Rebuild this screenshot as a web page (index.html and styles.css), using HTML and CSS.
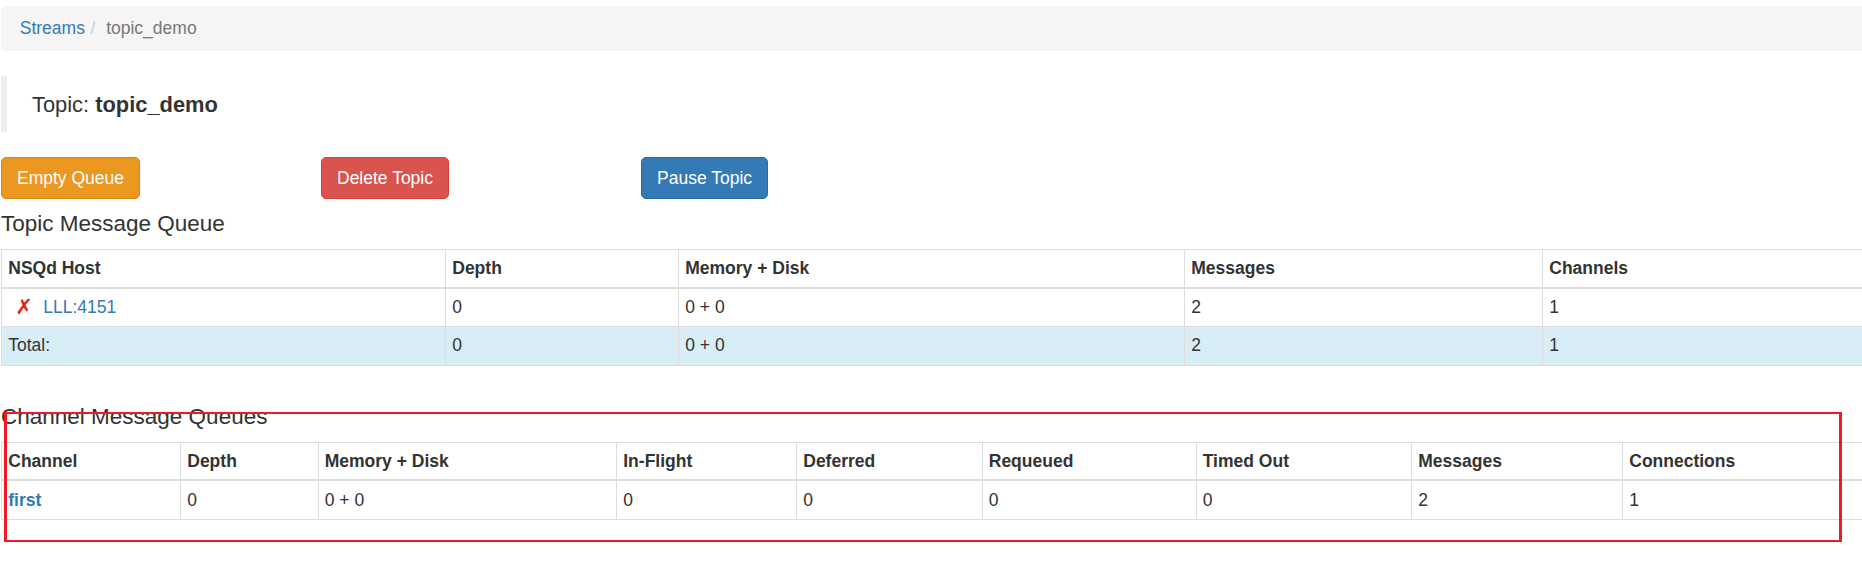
FILE: index.html
```html
<!DOCTYPE html>
<html lang="en">
<head>
<meta charset="utf-8">
<title>topic_demo - nsqadmin</title>
<link rel="stylesheet" href="styles.css">
</head>
<body>
<div class="page">
  <ol class="breadcrumb">
    <li><a href="#">Streams</a></li>
    <li class="active">topic_demo</li>
  </ol>

  <blockquote class="topic-title">Topic: <strong>topic_demo</strong></blockquote>

  <div class="actions">
    <button class="btn btn-warning">Empty Queue</button>
    <button class="btn btn-danger">Delete Topic</button>
    <button class="btn btn-primary">Pause Topic</button>
  </div>

  <h4 class="section-title">Topic Message Queue</h4>
  <table class="table t-topic">
    <colgroup>
      <col class="c-host"><col class="c-depth"><col class="c-mem"><col class="c-msgs"><col>
    </colgroup>
    <thead>
      <tr><th>NSQd Host</th><th>Depth</th><th>Memory + Disk</th><th>Messages</th><th>Channels</th></tr>
    </thead>
    <tbody>
      <tr>
        <td><span class="tomb">✗</span><a href="#">LLL:4151</a></td>
        <td>0</td><td>0 + 0</td><td>2</td><td>1</td>
      </tr>
      <tr class="info">
        <td>Total:</td><td>0</td><td>0 + 0</td><td>2</td><td>1</td>
      </tr>
    </tbody>
  </table>

  <h4 class="section-title channels-title">Channel Message Queues</h4>
  <table class="table t-channels">
    <colgroup>
      <col class="c-chan"><col class="c-cdepth"><col class="c-cmem"><col class="c-flight"><col class="c-def"><col class="c-req"><col class="c-timed"><col class="c-cmsgs"><col>
    </colgroup>
    <thead>
      <tr><th>Channel</th><th>Depth</th><th>Memory + Disk</th><th>In-Flight</th><th>Deferred</th><th>Requeued</th><th>Timed Out</th><th>Messages</th><th>Connections</th></tr>
    </thead>
    <tbody>
      <tr>
        <th><a href="#">first</a></th>
        <td>0</td><td>0 + 0</td><td>0</td><td>0</td><td>0</td><td>0</td><td>2</td><td>1</td>
      </tr>
    </tbody>
  </table>
</div>
<div class="annotation"></div>
</body>
</html>
```

FILE: styles.css
```css
html {
  overflow: hidden;
  background: #fff;
}

body {
  margin: 0;
  padding: 0;
  font-family: "Liberation Sans", Arial, Helvetica, sans-serif;
  font-size: 17.5px;
  line-height: 25px;
  color: #333;
}

a {
  color: #337ab7;
  text-decoration: none;
}

.page {
  width: 1900px;
  padding: 6px 0 0 1px;
}

/* breadcrumb */
.breadcrumb {
  display: flex;
  list-style: none;
  margin: 0 0 25px 0;
  padding: 10px 18.75px;
  background: #f5f5f5;
  border-radius: 5px;
}

.breadcrumb li + li::before {
  content: "/\00a0";
  color: #ccc;
  padding: 0 6px 0 5.5px;
}

.breadcrumb .active {
  color: #777;
}

/* topic title */
.topic-title {
  margin: 0 0 25px 0;
  padding: 12.5px 25px;
  border-left: 6px solid #eee;
  font-size: 21.875px;
  line-height: 31.25px;
}

/* action buttons */
.actions {
  display: grid;
  grid-template-columns: repeat(3, 320px);
  justify-items: start;
}

.btn {
  font-family: inherit;
  font-size: 17.5px;
  line-height: 25px;
  font-weight: 400;
  padding: 7.5px 15px;
  border: 1px solid transparent;
  border-radius: 5px;
  color: #fff;
  white-space: nowrap;
  cursor: pointer;
}

.btn-warning {
  background: #ec971f;
  border-color: #d58512;
}

.btn-danger {
  background: #d9534f;
  border-color: #d43f3a;
}

.btn-primary {
  background: #337ab7;
  border-color: #2e6da4;
}

/* headings */
.section-title {
  font-size: 22.5px;
  line-height: 1.1;
  font-weight: 400;
  margin: 12.5px 0;
}

.channels-title {
  margin-top: 39px;
}

/* tables */
.table {
  width: 1899px;
  table-layout: fixed;
  border-collapse: collapse;
  margin-bottom: 25px;
}

.table th,
.table td {
  border: 1px solid #ddd;
  padding: 6.25px;
  line-height: 25px;
  text-align: left;
  vertical-align: top;
}

.table th {
  font-weight: 700;
}

.table thead th {
  border-bottom-width: 2px;
  padding-bottom: 5.25px;
}

.table tr.info td {
  background: #d9edf7;
}

.tomb {
  display: inline-block;
  box-sizing: border-box;
  width: 35px;
  padding-left: 7px;
  color: #e0261b;
  font-family: "DejaVu Sans", sans-serif;
  font-size: 21px;
  line-height: 25px;
  vertical-align: top;
}

.c-host { width: 444px; }
.c-depth { width: 233px; }
.c-mem { width: 506px; }
.c-msgs { width: 358px; }

.c-chan { width: 179px; }
.c-cdepth { width: 137.5px; }
.c-cmem { width: 298.5px; }
.c-flight { width: 180px; }
.c-def { width: 185.5px; }
.c-req { width: 214px; }
.c-timed { width: 215.5px; }
.c-cmsgs { width: 211px; }

/* red annotation box drawn over the screenshot */
.annotation {
  position: absolute;
  left: 4px;
  top: 412px;
  width: 1838px;
  height: 130px;
  box-sizing: border-box;
  border: 2px solid #ed1c24;
  border-left-width: 3px;
  border-right-width: 3px;
}
```
